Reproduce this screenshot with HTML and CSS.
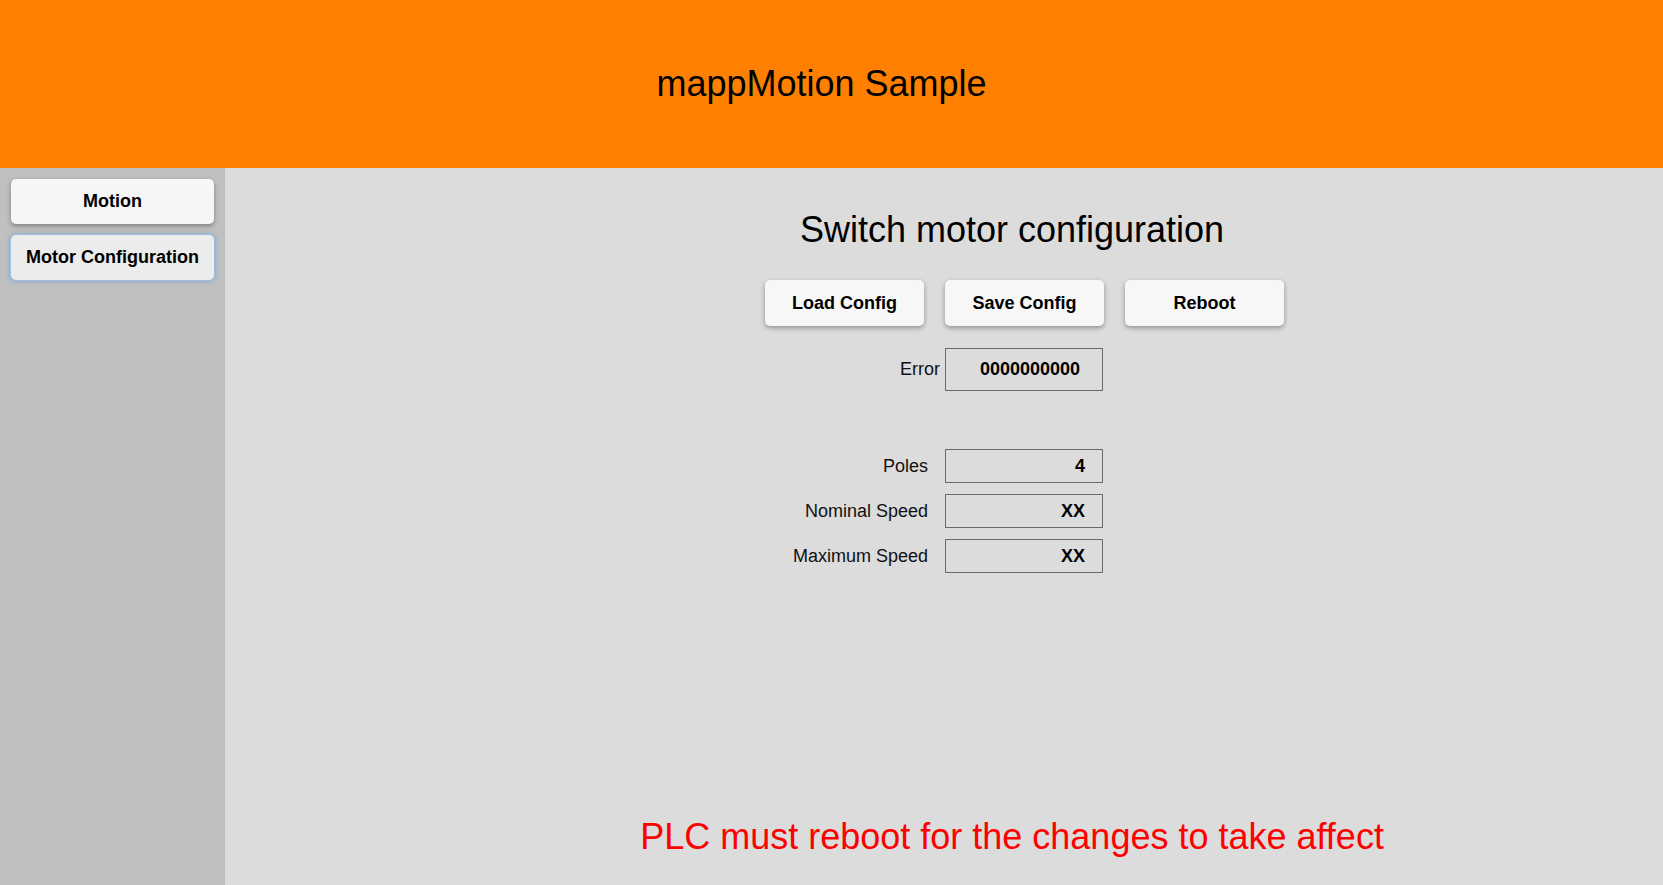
FILE: index.html
```html
<!DOCTYPE html>
<html>
<head>
<meta charset="utf-8">
<title>mappMotion Sample</title>
<link rel="stylesheet" href="styles.css">
</head>
<body>
<div class="app">
  <header class="header">
    <h1 class="header-title">mappMotion Sample</h1>
  </header>
  <div class="body">
    <nav class="sidebar">
      <button class="nav-btn">Motion</button>
      <button class="nav-btn nav-btn-active">Motor Configuration</button>
    </nav>
    <main class="main">
      <div class="content">
        <div class="title-row"><h2 class="title">Switch motor configuration</h2></div>
        <div class="actions">
          <button class="action-btn">Load Config</button>
          <button class="action-btn">Save Config</button>
          <button class="action-btn">Reboot</button>
        </div>
        <div class="row row-error">
          <span class="label label-error">Error</span>
          <span class="box box-error">0000000000</span>
        </div>
        <div class="params">
          <div class="row">
            <span class="label">Poles</span>
            <span class="box box-value">4</span>
          </div>
          <div class="row">
            <span class="label">Nominal Speed</span>
            <span class="box box-value">XX</span>
          </div>
          <div class="row">
            <span class="label">Maximum Speed</span>
            <span class="box box-value">XX</span>
          </div>
        </div>
        <div class="notice-row"><p class="notice">PLC must reboot for the changes to take affect</p></div>
      </div>
    </main>
  </div>
</div>
</body>
</html>
```

FILE: styles.css
```css
* { box-sizing: border-box; }
html, body {
  margin: 0;
  padding: 0;
  height: 100%;
  overflow: hidden;
}
body {
  font-family: "Liberation Sans", Arial, sans-serif;
  color: #000;
  background: #dcdcdc;
}
.app {
  display: flex;
  flex-direction: column;
  height: 885px;
}
.header {
  height: 168px;
  flex: 0 0 168px;
  background: #ff8000;
  display: flex;
  align-items: center;
  justify-content: center;
  padding-right: 20px;
}
.header-title {
  margin: 0;
  font-size: 36px;
  line-height: 42px;
  font-weight: normal;
}
.body {
  flex: 1;
  display: flex;
}
.sidebar {
  width: 225px;
  flex: 0 0 225px;
  background: #c0c0c0;
  display: flex;
  flex-direction: column;
  gap: 11px;
  padding: 11px 11px 0 11px;
}
.nav-btn {
  width: 203px;
  height: 45px;
  border: none;
  border-radius: 5px;
  background: #f6f6f6;
  font-family: inherit;
  font-size: 18px;
  font-weight: bold;
  color: #000;
  box-shadow: 0 2px 5px rgba(0,0,0,0.35);
  padding: 0;
}
.nav-btn-active {
  background: #ececec;
  box-shadow: 0 0 0 1px #9cc0de, 0 0 5px 1px rgba(70,140,205,0.55);
}
.main {
  flex: 1;
  display: flex;
  padding-left: 540px;
}
.content {
  width: 519px;
  display: flex;
  flex-direction: column;
  padding-top: 41px;
  padding-bottom: 27px;
}
.title-row {
  width: 494px;
  display: flex;
  justify-content: center;
}
.title {
  margin: 0;
  font-size: 36px;
  line-height: 42px;
  font-weight: normal;
  white-space: nowrap;
}
.actions {
  display: flex;
  gap: 21px;
  margin-top: 29px;
}
.action-btn {
  width: 159px;
  height: 46px;
  border: none;
  border-radius: 5px;
  background: #f7f7f7;
  font-family: inherit;
  font-size: 18px;
  font-weight: bold;
  color: #000;
  box-shadow: 0 2px 5px rgba(0,0,0,0.35);
  padding: 0;
}
.row {
  display: flex;
  align-items: center;
}
.row-error {
  margin-top: 22px;
}
.label {
  width: 180px;
  text-align: right;
  font-size: 18px;
  padding-right: 17px;
  color: #111;
}
.label-error {
  padding-right: 5px;
}
.box {
  width: 158px;
  border: 1px solid #6a6a6a;
  font-size: 18px;
  font-weight: bold;
  display: flex;
  align-items: center;
}
.box-error {
  height: 43px;
  justify-content: center;
  padding-left: 12px;
}
.params {
  display: flex;
  flex-direction: column;
  gap: 11px;
  margin-top: 58px;
}
.box-value {
  height: 34px;
  justify-content: flex-end;
  padding-right: 17px;
}
.notice-row {
  margin-top: auto;
  width: 494px;
  display: flex;
  justify-content: center;
}
.notice {
  margin: 0;
  font-size: 36px;
  line-height: 42px;
  color: #ff0000;
  white-space: nowrap;
}
```
